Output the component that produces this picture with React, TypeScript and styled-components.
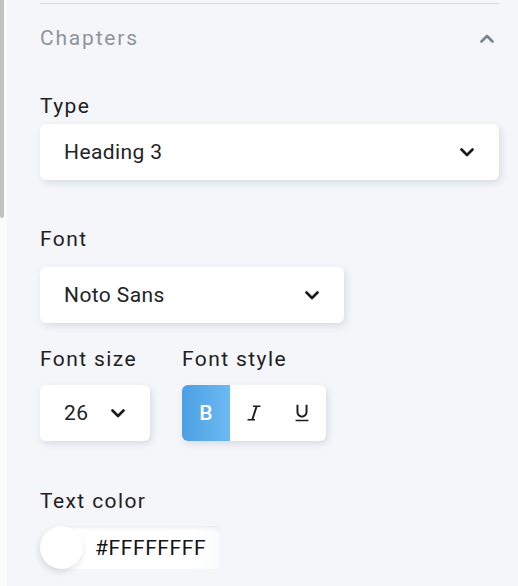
import React, { useState } from 'react';
import styled, { createGlobalStyle } from 'styled-components';

const GlobalStyle = createGlobalStyle`
  html, body {
    margin: 0;
    padding: 0;
    height: 100%;
    background: #f4f6fa;
    font-family: Roboto, 'Noto Sans', 'Liberation Sans', sans-serif;
    -webkit-font-smoothing: antialiased;
  }
  #root {
    height: 100%;
  }
`;

const Page = styled.div`
  display: flex;
  height: 586px;
  overflow: hidden;
`;

const ScrollTrack = styled.div`
  width: 7px;
  flex: none;
  background: #fafbfc;
  display: flex;
  flex-direction: column;
`;

const ScrollThumb = styled.div`
  width: 4px;
  height: 218px;
  background: #c1c1c3;
  border-radius: 0 0 2px 2px;
`;

const Panel = styled.div`
  flex: 1;
  padding: 0 19px 0 33px;
  display: flex;
  flex-direction: column;
`;

const Divider = styled.div`
  height: 1px;
  margin-top: 3px;
  background: #d6d9de;
`;

const Header = styled.div`
  display: flex;
  align-items: center;
  justify-content: space-between;
  height: 28px;
  margin-top: 20px;
  padding-right: 5px;
`;

const HeaderTitle = styled.span`
  font-size: 21px;
  line-height: 28px;
  letter-spacing: 1.8px;
  color: #8e949c;
`;

const Label = styled.div<{ $gap: number }>`
  font-size: 21px;
  line-height: 28px;
  letter-spacing: 1.4px;
  color: #1f2023;
  margin-bottom: ${(p) => p.$gap}px;
`;

const Section = styled.div<{ $top: number }>`
  margin-top: ${(p) => p.$top}px;
  display: flex;
  flex-direction: column;
`;

const Select = styled.div<{ $width?: number }>`
  box-sizing: border-box;
  width: ${(p) => (p.$width ? `${p.$width}px` : '100%')};
  height: 56px;
  padding: 0 25px 0 24px;
  display: flex;
  align-items: center;
  justify-content: space-between;
  background: #ffffff;
  border-radius: 6px;
  box-shadow: 2px 3px 7px rgba(40, 50, 70, 0.13);
  font-size: 21px;
  letter-spacing: 0.4px;
  color: #222326;
  cursor: pointer;
`;

const Row = styled.div`
  display: flex;
  gap: 32px;
  margin-top: 22px;
`;

const Column = styled.div`
  display: flex;
  flex-direction: column;
`;

const StyleGroup = styled.div`
  display: flex;
  height: 56px;
  background: #ffffff;
  border-radius: 6px;
  box-shadow: 2px 3px 7px rgba(40, 50, 70, 0.13);
  overflow: hidden;
`;

const StyleButton = styled.button<{ $active?: boolean }>`
  width: 48px;
  height: 56px;
  border: none;
  padding: 0;
  display: flex;
  align-items: center;
  justify-content: center;
  cursor: pointer;
  font-family: Roboto, 'Liberation Sans', sans-serif;
  font-size: 21px;
  font-weight: 500;
  background: ${(p) => (p.$active ? 'linear-gradient(90deg, #4c9fe2 0%, #6cbaf3 100%)' : 'transparent')};
  color: ${(p) => (p.$active ? '#ffffff' : '#1c1c1e')};
`;

const ColorField = styled.div`
  display: flex;
  align-items: center;
  width: 180px;
  height: 43px;
  margin-top: -1px;
  background: linear-gradient(90deg, #ffffff 85%, rgba(255, 255, 255, 0.6) 100%);
  border-radius: 22px 6px 6px 22px;
  box-shadow: inset 0 3px 4px -2px rgba(0, 0, 0, 0.1);
`;

const Swatch = styled.div<{ $color: string }>`
  width: 43px;
  height: 43px;
  border-radius: 50%;
  flex: none;
  background: ${(p) => p.$color};
  box-shadow: -1px 3px 6px rgba(0, 0, 0, 0.12);
`;

const ColorText = styled.span`
  margin-left: 12px;
  font-size: 21px;
  letter-spacing: 0.6px;
  color: #141414;
`;

const Chevron = ({ up, color = '#1a1a1a' }: { up?: boolean; color?: string }) => (
  <svg width="14" height="9" viewBox="0 0 14 9" fill="none">
    <polyline
      points={up ? '1.5,7.5 7,2 12.5,7.5' : '1.5,1.5 7,7 12.5,1.5'}
      stroke={color}
      strokeWidth="2.6"
      strokeLinecap="round"
      strokeLinejoin="round"
    />
  </svg>
);

const ItalicIcon = () => (
  <svg width="24" height="24" viewBox="0 0 24 24" fill="currentColor">
    <path d="M11 4.5H18.5V6.1H15.4L11.5 17.9H13V19.5H5.5V17.9H9.5L13.4 6.1H11Z" />
  </svg>
);

const UnderlineIcon = () => (
  <svg width="22" height="22" viewBox="0 0 24 24" fill="currentColor">
    <path d="M12 17c3.31 0 6-2.69 6-6V3h-2.1v8c0 2.15-1.75 3.9-3.9 3.9S8.1 13.15 8.1 11V3H6v8c0 3.31 2.69 6 6 6zm-7 2.4v1.6h14v-1.6H5z" />
  </svg>
);

const App: React.FC = () => {
  const [bold, setBold] = useState(true);
  const [italic, setItalic] = useState(false);
  const [underline, setUnderline] = useState(false);

  return (
    <>
      <GlobalStyle />
      <Page>
        <ScrollTrack>
          <ScrollThumb />
        </ScrollTrack>
        <Panel>
          <Divider />
          <Header>
            <HeaderTitle>Chapters</HeaderTitle>
            <Chevron up color="#7c828b" />
          </Header>

          <Section $top={40}>
            <Label $gap={4}>Type</Label>
            <Select>
              <span>Heading 3</span>
              <Chevron />
            </Select>
          </Section>

          <Section $top={45}>
            <Label $gap={14}>Font</Label>
            <Select $width={304}>
              <span>Noto Sans</span>
              <Chevron />
            </Select>
          </Section>

          <Row>
            <Column>
              <Label $gap={12}>Font size</Label>
              <Select $width={110}>
                <span>26</span>
                <Chevron />
              </Select>
            </Column>
            <Column>
              <Label $gap={12}>Font style</Label>
              <StyleGroup>
                <StyleButton $active={bold} onClick={() => setBold(!bold)}>
                  B
                </StyleButton>
                <StyleButton $active={italic} onClick={() => setItalic(!italic)}>
                  <ItalicIcon />
                </StyleButton>
                <StyleButton $active={underline} onClick={() => setUnderline(!underline)}>
                  <UnderlineIcon />
                </StyleButton>
              </StyleGroup>
            </Column>
          </Row>

          <Section $top={46}>
            <Label $gap={12}>Text color</Label>
            <ColorField>
              <Swatch $color="#ffffff" />
              <ColorText>#FFFFFFFF</ColorText>
            </ColorField>
          </Section>
        </Panel>
      </Page>
    </>
  );
};

export default App;
